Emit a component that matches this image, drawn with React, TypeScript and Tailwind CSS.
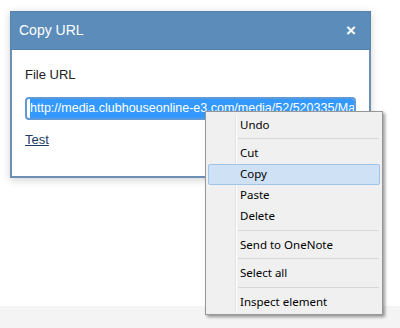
const menuItems: (string | null)[] = [
  "Undo",
  null,
  "Cut",
  "Copy",
  "Paste",
  "Delete",
  null,
  "Send to OneNote",
  null,
  "Select all",
  null,
  "Inspect element",
];

const ContextMenu = () => {
  return (
    <div className="absolute left-[205px] top-[111px] w-[178px] border border-[#979797] bg-[#f0f0f0] py-[2px] shadow-[2px_2px_3px_rgba(0,0,0,0.4)] font-['Noto_Sans',sans-serif] text-[11.5px] text-black">
      <div className="absolute left-[29px] top-[2px] bottom-[2px] w-px bg-[#e2e2e2]" />
      <div className="absolute left-[30px] top-[2px] bottom-[2px] w-px bg-white" />
      {menuItems.map((item, i) =>
        item === null ? (
          <div key={i} className="flex h-[7.5px] items-center pl-[32px] pr-[3px]">
            <div className="h-px w-full bg-[#d7d7d7]" />
          </div>
        ) : (
          <div
            key={i}
            className={
              item === "Copy"
                ? "relative mx-[2px] flex h-[21px] items-center rounded-[2px] border border-[#9ec4ea] bg-[#cfe1f4] pl-[31px]"
                : "relative mx-[2px] flex h-[21px] items-center border border-transparent pl-[31px]"
            }
          >
            {item}
          </div>
        )
      )}
    </div>
  );
};

export default function App() {
  return (
    <div className="relative flex h-[328px] w-[400px] flex-col overflow-hidden bg-white font-['Liberation_Sans',Arial,sans-serif]">
      <div className="ml-[10px] mt-[11px] w-[361px] border-2 border-t-0 border-[#6d8fb3] bg-white shadow-[0_2px_8px_rgba(0,0,0,0.18)]">
        <div className="-mx-[2px] flex h-[39px] items-center justify-between border border-[#5683ad] bg-[#5b8cba] px-[8px] text-white">
          <span className="text-[14px]">Copy URL</span>
          <span className="mr-[6px] text-[17px] font-bold leading-none">×</span>
        </div>
        <div className="px-[13px] pb-[27px] pt-[15px]">
          <div className="text-[13px] text-[#222]">File URL</div>
          <div className="mt-[12px] flex h-[23px] items-center overflow-hidden whitespace-nowrap rounded-[4px] border-2 border-[#5f9ad6] pl-[3px] text-[12.5px]">
            <span className="bg-[#3399ff] py-[1px] text-white">
              http://media.clubhouseonline-e3.com/media/52/520335/Ma
            </span>
          </div>
          <div className="mt-[10px] text-[13px] text-[#1d3c63] underline">Test</div>
        </div>
      </div>
      <div className="flex-1" />
      <div className="h-[22px] bg-[#f4f4f4]" />
      <ContextMenu />
    </div>
  );
}
